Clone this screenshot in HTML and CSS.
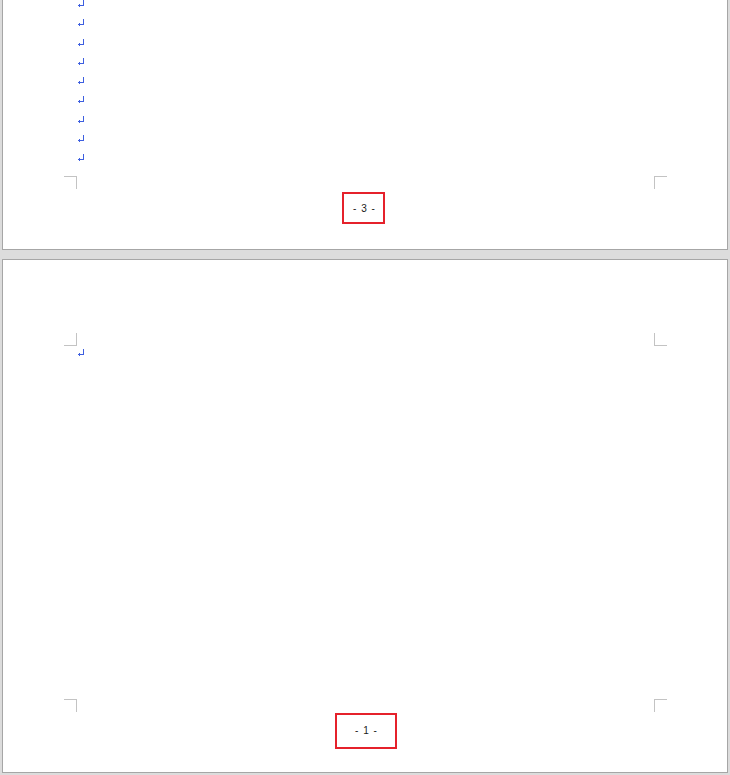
FILE: index.html
```html
<!DOCTYPE html>
<html>
<head>
<meta charset="utf-8">
<link rel="stylesheet" href="styles.css">
</head>
<body>
<div class="doc">
  <div class="page page-first">
    <div class="lines">
      <div class="line"><svg class="ret" width="7" height="8" viewBox="0 0 7 8"><rect x="5" y="0" width="1" height="6"/><rect x="1" y="5" width="5" height="1"/><rect x="1" y="4" width="1" height="3"/><rect x="0" y="5" width="1" height="1"/></svg></div>
      <div class="line line-tall"><svg class="ret" width="7" height="8" viewBox="0 0 7 8"><rect x="5" y="0" width="1" height="6"/><rect x="1" y="5" width="5" height="1"/><rect x="1" y="4" width="1" height="3"/><rect x="0" y="5" width="1" height="1"/></svg></div>
      <div class="line"><svg class="ret" width="7" height="8" viewBox="0 0 7 8"><rect x="5" y="0" width="1" height="6"/><rect x="1" y="5" width="5" height="1"/><rect x="1" y="4" width="1" height="3"/><rect x="0" y="5" width="1" height="1"/></svg></div>
      <div class="line"><svg class="ret" width="7" height="8" viewBox="0 0 7 8"><rect x="5" y="0" width="1" height="6"/><rect x="1" y="5" width="5" height="1"/><rect x="1" y="4" width="1" height="3"/><rect x="0" y="5" width="1" height="1"/></svg></div>
      <div class="line"><svg class="ret" width="7" height="8" viewBox="0 0 7 8"><rect x="5" y="0" width="1" height="6"/><rect x="1" y="5" width="5" height="1"/><rect x="1" y="4" width="1" height="3"/><rect x="0" y="5" width="1" height="1"/></svg></div>
      <div class="line line-tall"><svg class="ret" width="7" height="8" viewBox="0 0 7 8"><rect x="5" y="0" width="1" height="6"/><rect x="1" y="5" width="5" height="1"/><rect x="1" y="4" width="1" height="3"/><rect x="0" y="5" width="1" height="1"/></svg></div>
      <div class="line"><svg class="ret" width="7" height="8" viewBox="0 0 7 8"><rect x="5" y="0" width="1" height="6"/><rect x="1" y="5" width="5" height="1"/><rect x="1" y="4" width="1" height="3"/><rect x="0" y="5" width="1" height="1"/></svg></div>
      <div class="line"><svg class="ret" width="7" height="8" viewBox="0 0 7 8"><rect x="5" y="0" width="1" height="6"/><rect x="1" y="5" width="5" height="1"/><rect x="1" y="4" width="1" height="3"/><rect x="0" y="5" width="1" height="1"/></svg></div>
      <div class="line"><svg class="ret" width="7" height="8" viewBox="0 0 7 8"><rect x="5" y="0" width="1" height="6"/><rect x="1" y="5" width="5" height="1"/><rect x="1" y="4" width="1" height="3"/><rect x="0" y="5" width="1" height="1"/></svg></div>
    </div>
    <div class="marks marks-bottom">
      <span class="mark mark-bl"></span>
      <span class="mark mark-br"></span>
    </div>
    <div class="footer">
      <div class="pnum pnum-3">- 3 -</div>
    </div>
  </div>

  <div class="page page-second">
    <div class="marks marks-top">
      <span class="mark mark-tl"></span>
      <span class="mark mark-tr"></span>
    </div>
    <div class="lines lines-second">
      <div class="line"><svg class="ret" width="7" height="8" viewBox="0 0 7 8"><rect x="5" y="0" width="1" height="6"/><rect x="1" y="5" width="5" height="1"/><rect x="1" y="4" width="1" height="3"/><rect x="0" y="5" width="1" height="1"/></svg></div>
    </div>
    <div class="spacer"></div>
    <div class="marks marks-bottom2">
      <span class="mark mark-bl"></span>
      <span class="mark mark-br"></span>
    </div>
    <div class="footer footer-second">
      <div class="pnum pnum-1">- 1 -</div>
    </div>
  </div>
</div>
</body>
</html>
```

FILE: styles.css
```css
html, body {
  margin: 0;
  padding: 0;
  background: #dcdcdc;
  font-family: "Liberation Sans", Arial, sans-serif;
}

.doc {
  width: 730px;
  height: 775px;
  padding: 0 2px;
  box-sizing: border-box;
  display: flex;
  flex-direction: column;
  overflow: hidden;
}

.page {
  background: #ffffff;
  border: 1px solid #a6a6a6;
  box-sizing: border-box;
  width: 726px;
  display: flex;
  flex-direction: column;
}

.page-first {
  border-top: none;
  height: 250px;
}

.page-second {
  margin-top: 9px;
  height: 514px;
  padding-top: 73px;
}

.lines {
  padding-left: 75px;
  display: flex;
  flex-direction: column;
}

.line {
  height: 19px;
  display: flex;
  align-items: flex-start;
}

.line-tall {
  height: 20px;
}

.ret {
  display: block;
  fill: #3d5fe0;
}

.lines-second {
  margin-top: 3px;
}

.marks {
  display: flex;
  justify-content: space-between;
  padding: 0 60px 0 61px;
  height: 13px;
}

.marks-bottom {
  margin-top: 3px;
}

.spacer {
  flex: 1;
}

.mark {
  display: block;
  width: 12px;
  height: 12px;
  border: 0 solid #c3c3c3;
}

.mark-bl {
  border-top-width: 1px;
  border-right-width: 1px;
}

.mark-br {
  border-top-width: 1px;
  border-left-width: 1px;
}

.mark-tl {
  border-bottom-width: 1px;
  border-right-width: 1px;
}

.mark-tr {
  border-bottom-width: 1px;
  border-left-width: 1px;
}

.footer {
  display: flex;
  margin-top: 3px;
  padding-left: 339px;
}

.footer-second {
  margin-top: 1px;
  padding-left: 332px;
  margin-bottom: 23px;
}

.pnum {
  border: 2px solid #e5212b;
  box-sizing: border-box;
  display: flex;
  align-items: center;
  justify-content: center;
  font-size: 10px;
  color: #1a1a1a;
  word-spacing: 2px;
  white-space: pre;
}

.pnum-3 {
  width: 43px;
  height: 32px;
  padding-left: 1px;
}

.pnum-1 {
  width: 62px;
  height: 36px;
  padding-bottom: 1px;
}
```
